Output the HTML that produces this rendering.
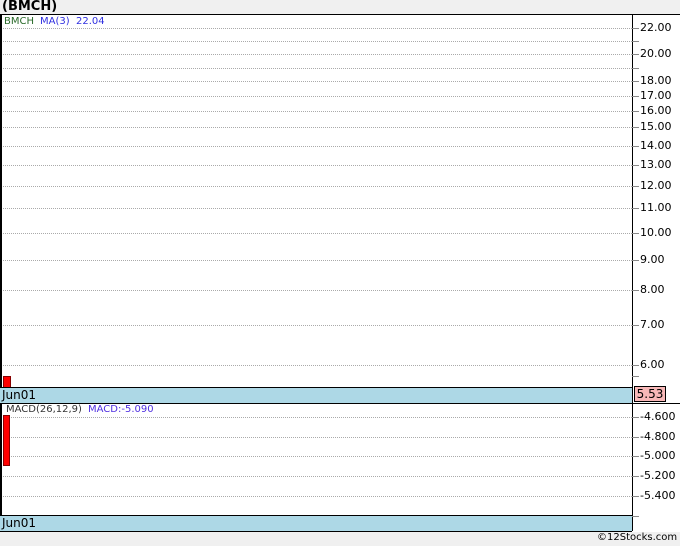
<!DOCTYPE html><html><head><style>
body{margin:0;width:680px;height:546px;background:#f0f0f0;position:relative;overflow:hidden;font-family:Verdana,"DejaVu Sans",sans-serif;font-size:11px}
div{position:absolute}
.g{left:3px;width:629px;border-top:1px dotted #aaa;height:0}
.l{left:640px;font-size:11px;color:#000;line-height:12px}
.t{left:632px;width:7px;border-top:1px solid #888;height:0}
</style></head><body>
<div style="left:2px;top:-1px;font-weight:bold;font-size:13px;font-family:'DejaVu Sans',sans-serif">(BMCH)</div>
<div style="left:0;top:14px;width:680px;height:517px;background:#fff;border-top:1px solid #000"></div>
<div style="left:0;top:14px;width:2px;height:517px;background:#000"></div>
<div style="left:632px;top:14px;width:1px;height:517px;background:#000"></div>
<div style="left:4px;top:16px;font-size:10px;color:#2a6a2a">BMCH</div>
<div style="left:40px;top:16px;font-size:10px;color:#3030e0">MA(3)&nbsp;&nbsp;22.04</div>
<div class="g" style="top:28px"></div><div class="t" style="top:28px"></div><div class="l" style="top:22px">22.00</div>
<div class="g" style="top:41px"></div><div class="t" style="top:41px"></div>
<div class="g" style="top:54px"></div><div class="t" style="top:54px"></div><div class="l" style="top:48px">20.00</div>
<div class="g" style="top:68px"></div><div class="t" style="top:68px"></div>
<div class="g" style="top:81px"></div><div class="t" style="top:81px"></div><div class="l" style="top:75px">18.00</div>
<div class="g" style="top:96px"></div><div class="t" style="top:96px"></div><div class="l" style="top:90px">17.00</div>
<div class="g" style="top:111px"></div><div class="t" style="top:111px"></div><div class="l" style="top:105px">16.00</div>
<div class="g" style="top:127px"></div><div class="t" style="top:127px"></div><div class="l" style="top:121px">15.00</div>
<div class="g" style="top:146px"></div><div class="t" style="top:146px"></div><div class="l" style="top:140px">14.00</div>
<div class="g" style="top:165px"></div><div class="t" style="top:165px"></div><div class="l" style="top:159px">13.00</div>
<div class="g" style="top:186px"></div><div class="t" style="top:186px"></div><div class="l" style="top:180px">12.00</div>
<div class="g" style="top:208px"></div><div class="t" style="top:208px"></div><div class="l" style="top:202px">11.00</div>
<div class="g" style="top:233px"></div><div class="t" style="top:233px"></div><div class="l" style="top:227px">10.00</div>
<div class="g" style="top:260px"></div><div class="t" style="top:260px"></div><div class="l" style="top:254px">9.00</div>
<div class="g" style="top:290px"></div><div class="t" style="top:290px"></div><div class="l" style="top:284px">8.00</div>
<div class="g" style="top:325px"></div><div class="t" style="top:325px"></div><div class="l" style="top:319px">7.00</div>
<div class="g" style="top:365px"></div><div class="t" style="top:365px"></div><div class="l" style="top:359px">6.00</div>
<div class="t" style="top:376px"></div>
<div style="left:3px;top:376px;width:6px;height:10px;background:#f00;border:1px solid #800"></div>
<div style="left:0;top:387px;width:632px;height:15px;background:#add8e6;border-top:1px solid #000;border-bottom:1px solid #000"></div>
<div style="left:2px;top:388px;font-size:12px">Jun01</div>
<div style="left:632px;top:403px;width:48px;height:1px;background:#000"></div>
<div style="left:634px;top:386px;width:30px;height:14px;background:#f8b8b8;border:1px solid #000;font-size:12px;text-align:center;line-height:14px">5.53</div>
<div style="left:6px;top:404px;font-size:10px;color:#333">MACD(26,12,9)</div>
<div style="left:88px;top:404px;font-size:10px;color:#5030e0">MACD:-5.090</div>
<div class="g" style="top:417px"></div><div class="t" style="top:417px"></div><div class="l" style="top:411px">-4.600</div>
<div class="g" style="top:437px"></div><div class="t" style="top:437px"></div><div class="l" style="top:431px">-4.800</div>
<div class="g" style="top:456px"></div><div class="t" style="top:456px"></div><div class="l" style="top:450px">-5.000</div>
<div class="g" style="top:476px"></div><div class="t" style="top:476px"></div><div class="l" style="top:470px">-5.200</div>
<div class="g" style="top:496px"></div><div class="t" style="top:496px"></div><div class="l" style="top:490px">-5.400</div>
<div class="t" style="top:516px"></div>
<div style="left:3px;top:415px;width:5px;height:49px;background:#f00;border:1px solid #800"></div>
<div style="left:0;top:515px;width:632px;height:15px;background:#add8e6;border-top:1px solid #000;border-bottom:1px solid #000"></div>
<div style="left:2px;top:516px;font-size:12px">Jun01</div>
<div style="left:597px;top:532px;font-size:10px;font-family:'DejaVu Sans',sans-serif">©12Stocks.com</div>
</body></html>
